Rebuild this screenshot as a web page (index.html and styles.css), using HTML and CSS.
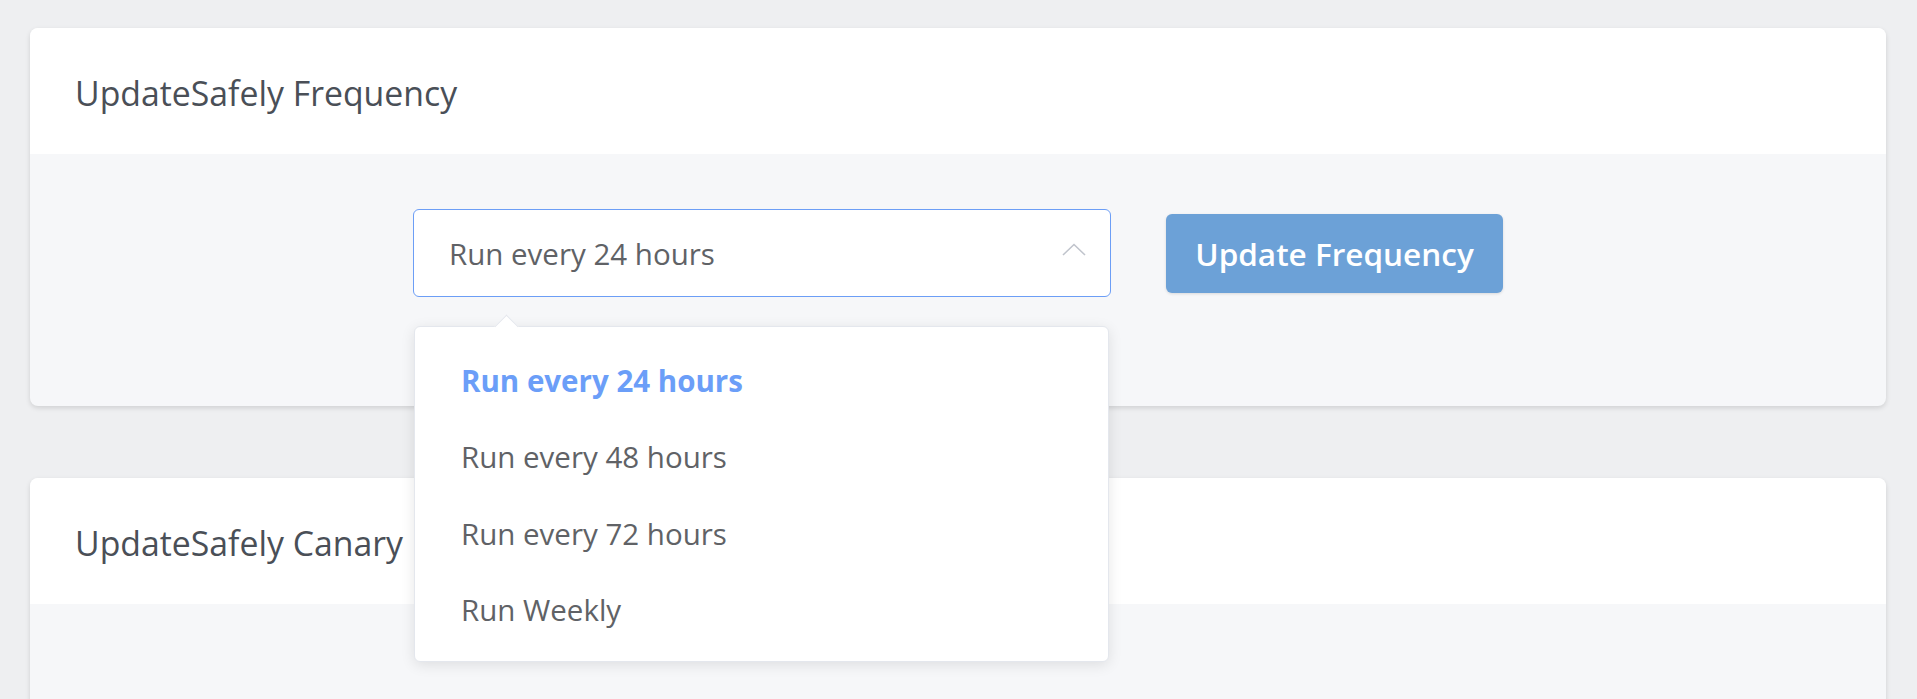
FILE: index.html
```html
<!DOCTYPE html>
<html lang="en">
<head>
<meta charset="utf-8">
<title>UpdateSafely Settings</title>
<link rel="stylesheet" href="styles.css">
</head>
<body>
<div class="page">
  <section class="card">
    <header class="card-head"><h2 class="card-title">UpdateSafely Frequency</h2></header>
    <div class="card-body card-body-form">
      <div class="form-row">
        <div class="select-wrap">
          <div class="select">
            <span class="select-value">Run every 24 hours</span>
            <svg class="select-caret" width="24" height="13" viewBox="0 0 24 13" aria-hidden="true">
              <path d="M1 12 L12 1.5 L23 12" fill="none" stroke="#c0c4cc" stroke-width="1.6"/>
            </svg>
          </div>
          <div class="dropdown">
            <span class="dropdown-arrow"></span>
            <ul class="dropdown-list">
              <li class="dropdown-item selected">Run every 24 hours</li>
              <li class="dropdown-item">Run every 48 hours</li>
              <li class="dropdown-item">Run every 72 hours</li>
              <li class="dropdown-item">Run Weekly</li>
            </ul>
          </div>
        </div>
        <button class="btn-primary" type="button">Update Frequency</button>
      </div>
    </div>
  </section>
  <section class="card">
    <header class="card-head"><h2 class="card-title">UpdateSafely Canary</h2></header>
    <div class="card-body card-body-empty"></div>
  </section>
</div>
</body>
</html>
```
FILE: styles.css
```css
html, body {
  margin: 0;
  padding: 0;
  background: #eeeff1;
  overflow: hidden;
}
body {
  font-family: "Open Sans", "Noto Sans", "Liberation Sans", sans-serif;
  color: #4a4f57;
}
.page {
  padding: 28px 31px 0 30px;
  display: flex;
  flex-direction: column;
  gap: 72px;
}
.card {
  background: #f6f7f9;
  border-radius: 8px;
  box-shadow: 0 2px 5px rgba(0, 0, 0, 0.13);
}
.card-head {
  height: 126px;
  background: #ffffff;
  border-radius: 8px 8px 0 0;
  display: flex;
  align-items: center;
  padding: 6px 0 0 45px;
  box-sizing: border-box;
}
.card-title {
  margin: 0;
  font-size: 33.8px;
  font-weight: 400;
  line-height: 1;
  color: #4a4f57;
}
.card-body-form {
  padding: 55px 0 109px;
}
.card-body-empty {
  height: 200px;
}
.form-row {
  display: flex;
  justify-content: center;
  align-items: center;
  gap: 55px;
}
.select-wrap {
  position: relative;
}
.select {
  width: 698px;
  height: 88px;
  box-sizing: border-box;
  border: 1.5px solid #6c9ef6;
  border-radius: 6px;
  background: #ffffff;
  display: flex;
  align-items: center;
  justify-content: space-between;
  padding: 2px 24px 0 35px;
}
.select-value,
.dropdown-item {
  font-size: 29.5px;
  color: #606266;
  line-height: 1;
}
.select-caret {
  display: block;
  margin-top: -10px;
}
.btn-primary {
  width: 337px;
  height: 79px;
  border: none;
  border-radius: 6px;
  background: #6ca1d7;
  color: #ffffff;
  font-family: "Open Sans", "Noto Sans", sans-serif;
  font-size: 31.5px;
  font-weight: 600;
  padding: 0;
  box-shadow: 0 1px 3px rgba(0, 0, 0, 0.12);
}
.dropdown {
  position: absolute;
  top: calc(100% + 29px);
  left: 1px;
  width: 695px;
  box-sizing: border-box;
  background: #ffffff;
  border: 1px solid #e4e7ed;
  border-radius: 6px;
  box-shadow: 0 3px 14px rgba(0, 0, 0, 0.1);
  z-index: 10;
}
.dropdown-arrow {
  position: absolute;
  top: -9px;
  left: 83px;
  width: 16px;
  height: 16px;
  background: #ffffff;
  border-top: 1px solid #e4e7ed;
  border-left: 1px solid #e4e7ed;
  transform: rotate(45deg);
}
.dropdown-list {
  list-style: none;
  margin: 0;
  padding: 15px 0 13px;
  position: relative;
}
.dropdown-item {
  height: 76.5px;
  display: flex;
  align-items: center;
  padding: 0 0 0 46px;
}
.dropdown-item.selected {
  color: #6b9ef8;
  font-weight: 700;
}
```
